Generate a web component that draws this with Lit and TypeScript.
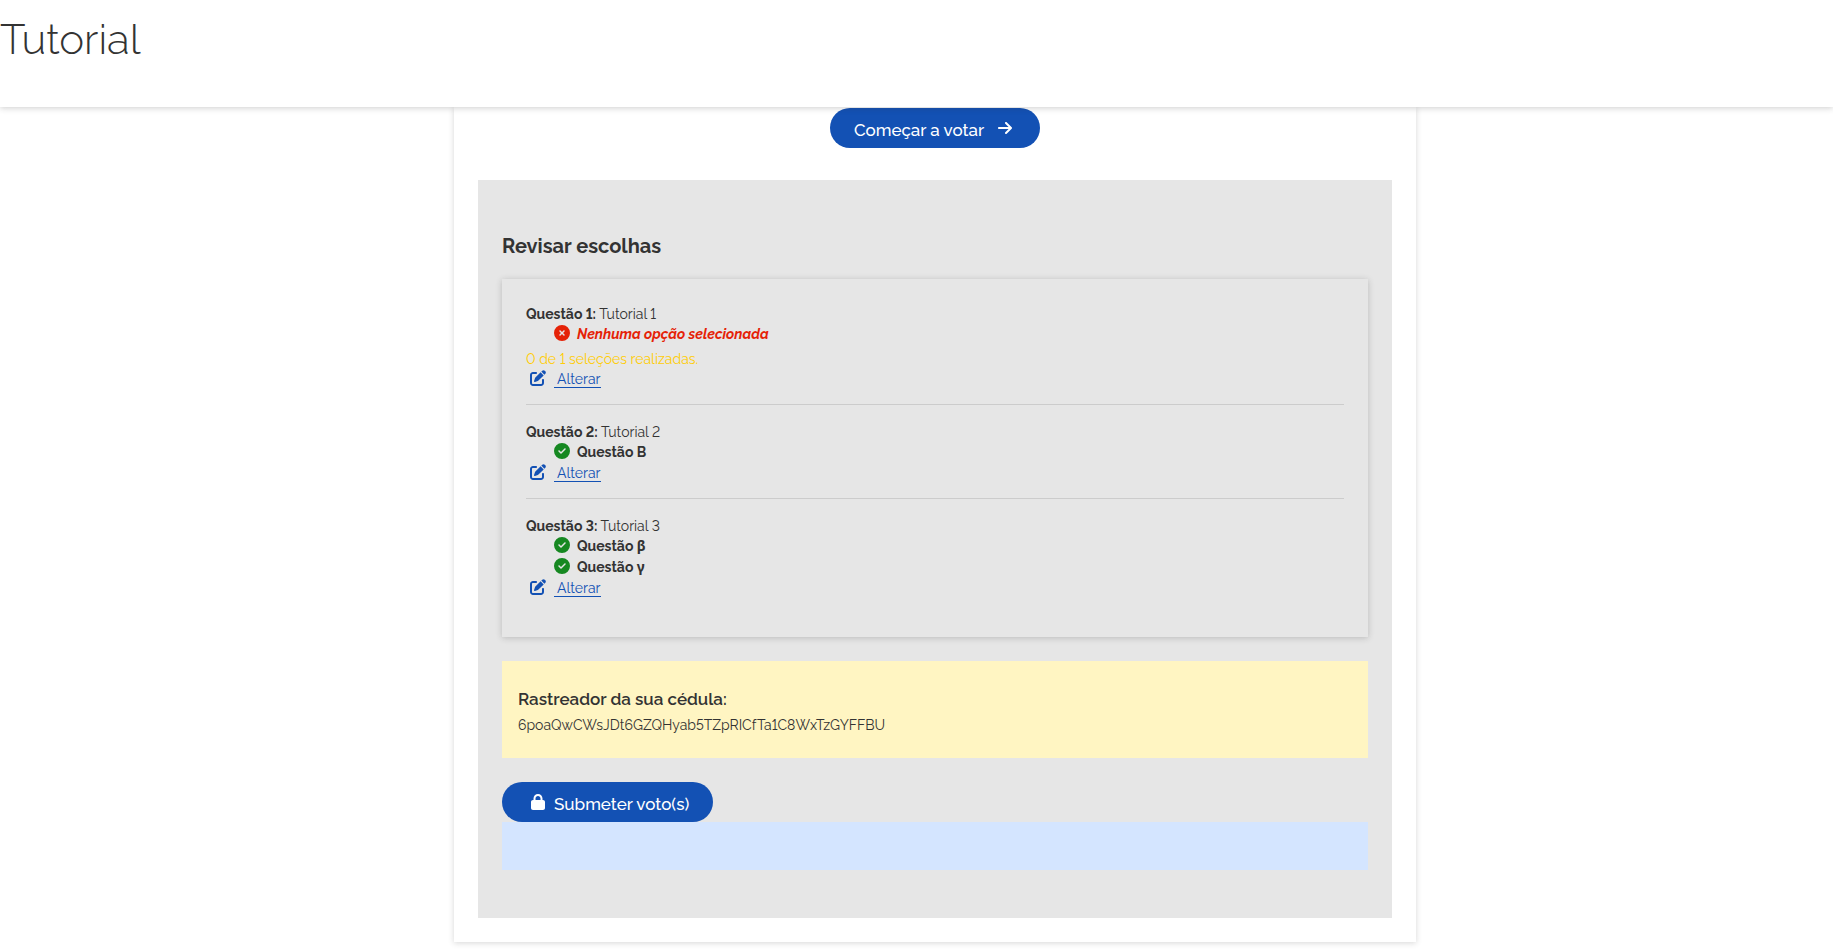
import { LitElement, html, css, svg, nothing } from "lit";
import { customElement, property } from "lit/decorators.js";

const ICONS: Record<string, { box: string; path: string }> = {
  arrow: {
    box: "0 0 448 512",
    path: "M438.6 278.6c12.5-12.5 12.5-32.8 0-45.3l-160-160c-12.5-12.5-32.8-12.5-45.3 0s-12.5 32.8 0 45.3L338.8 224 32 224c-17.7 0-32 14.3-32 32s14.3 32 32 32l306.7 0L233.4 393.4c-12.5 12.5-12.5 32.8 0 45.3s32.8 12.5 45.3 0l160-160z",
  },
  check: {
    box: "0 0 512 512",
    path: "M256 512A256 256 0 1 0 256 0a256 256 0 1 0 0 512zM369 209L241 337c-9.4 9.4-24.6 9.4-33.9 0l-64-64c-9.4-9.4-9.4-24.6 0-33.9s24.6-9.4 33.9 0l47 47L335 175c9.4-9.4 24.6-9.4 33.9 0s9.4 24.6 0 33.9z",
  },
  cross: {
    box: "0 0 512 512",
    path: "M256 512A256 256 0 1 0 256 0a256 256 0 1 0 0 512zM175 175c9.4-9.4 24.6-9.4 33.9 0l47 47 47-47c9.4-9.4 24.6-9.4 33.9 0s9.4 24.6 0 33.9l-47 47 47 47c9.4 9.4 9.4 24.6 0 33.9s-24.6 9.4-33.9 0l-47-47-47 47c-9.4 9.4-24.6 9.4-33.9 0s-9.4-24.6 0-33.9l47-47-47-47c-9.4-9.4-9.4-24.6 0-33.9z",
  },
  edit: {
    box: "0 0 512 512",
    path: "M471.6 21.7c-21.9-21.9-57.3-21.9-79.2 0L362.3 51.7l97.9 97.9 30.1-30.1c21.9-21.9 21.9-57.3 0-79.2L471.6 21.7zm-299.2 220c-6.1 6.1-10.8 13.6-13.5 21.9l-29.6 88.8c-2.9 8.6-.6 18.1 5.8 24.6s15.9 8.7 24.6 5.8l88.8-29.6c8.2-2.7 15.7-7.4 21.9-13.5L437.7 172.3 339.7 74.3 172.4 241.7zM96 64C43 64 0 107 0 160V416c0 53 43 96 96 96H352c53 0 96-43 96-96V320c0-17.7-14.3-32-32-32s-32 14.3-32 32v96c0 17.7-14.3 32-32 32H96c-17.7 0-32-14.3-32-32V160c0-17.7 14.3-32 32-32h96c17.7 0 32-14.3 32-32s-14.3-32-32-32H96z",
  },
  lock: {
    box: "0 0 448 512",
    path: "M144 144v48H304V144c0-44.2-35.8-80-80-80s-80 35.8-80 80zM80 192V144C80 64.5 144.5 0 224 0s144 64.5 144 144v48h16c35.3 0 64 28.7 64 64V448c0 35.3-28.7 64-64 64H64c-35.3 0-64-28.7-64-64V256c0-35.3 28.7-64 64-64H80z",
  },
};

const icon = (name: string) => html`<svg class="icon ${name}" viewBox=${ICONS[name].box} aria-hidden="true">
  ${svg`<path fill="currentColor" d=${ICONS[name].path}></path>`}
</svg>`;

interface Question {
  label: string;
  title: string;
  choices: string[];
  warning?: string;
}

const QUESTIONS: Question[] = [
  { label: "Questão 1:", title: "Tutorial 1", choices: [], warning: "0 de 1 seleções realizadas." },
  { label: "Questão 2:", title: "Tutorial 2", choices: ["Questão B"] },
  { label: "Questão 3:", title: "Tutorial 3", choices: ["Questão β", "Questão γ"] },
];

@customElement("question-review")
class QuestionReview extends LitElement {
  @property({ attribute: false }) question!: Question;

  static styles = css`
    :host {
      display: block;
    }
    .line,
    .warning {
      margin: 0;
      line-height: 20px;
    }
    .label {
      font-weight: 700;
    }
    .choices {
      list-style: none;
      margin: 0;
      padding: 0 0 0 28px;
    }
    .choice {
      display: flex;
      align-items: flex-start;
      gap: 7px;
      height: 21px;
      font-weight: 700;
    }
    .none {
      font-style: italic;
      color: #e52207;
    }
    .icon {
      flex: none;
      width: 16px;
      height: 16px;
      margin-top: 1px;
    }
    .check {
      color: #168821;
    }
    .warning {
      margin-top: 4px;
      color: #ffcd07;
    }
    .change {
      display: flex;
      gap: 8px;
      padding-left: 4px;
      height: 20px;
      color: #1351b4;
    }
    .link {
      padding-left: 3px;
      height: 18px;
      line-height: 20px;
      border-bottom: 1px solid #1351b4;
      color: #1351b4;
      text-decoration: none;
    }
  `;

  render() {
    const { label, title, choices, warning } = this.question;
    return html`
      <p class="line"><span class="label">${label}</span> ${title}</p>
      <ul class="choices">
        ${choices.length
          ? choices.map((c) => html`<li class="choice">${icon("check")}<span>${c}</span></li>`)
          : html`<li class="choice none">${icon("cross")}<span>Nenhuma opção selecionada</span></li>`}
      </ul>
      ${warning ? html`<p class="warning">${warning}</p>` : nothing}
      <div class="change">${icon("edit")}<a class="link" href="#">Alterar</a></div>
    `;
  }
}

@customElement("app-root")
class AppRoot extends LitElement {
  static styles = css`
    :host {
      display: block;
      min-height: 100vh;
      box-sizing: border-box;
      background: #fff;
      color: #333;
      font-family: Raleway, "Noto Sans", sans-serif;
      font-variant-numeric: lining-nums;
      font-size: 14px;
      line-height: 20px;
    }
    .header {
      position: relative;
      z-index: 1;
      padding: 16px 0 43px;
      background: #fff;
      box-shadow: 0 1px 6px rgba(51, 51, 51, 0.24);
    }
    .title {
      margin: 0;
      font-size: 42px;
      line-height: 48px;
      font-weight: 300;
    }
    .page {
      display: grid;
      grid-template-columns: 454fr 962fr 417fr;
    }
    .card {
      grid-column: 2;
      padding: 1px 24px 24px;
      box-shadow: 0 1px 6px rgba(51, 51, 51, 0.2);
    }
    .start {
      display: flex;
      justify-content: center;
      margin-bottom: 32px;
    }
    .button {
      display: inline-flex;
      align-items: center;
      height: 40px;
      padding: 0 24px;
      border: 0;
      border-radius: 20px;
      background: #1351b4;
      color: #fff;
      font-family: inherit;
      font-size: 17px;
      line-height: 24px;
      font-weight: 500;
    }
    .button span {
      padding-top: 3px;
    }
    .button .icon {
      width: 14px;
      height: 16px;
    }
    .next {
      gap: 14px;
      padding-right: 28px;
    }
    .send {
      gap: 9px;
      padding-left: 29px;
    }
    .review {
      padding: 48px 24px;
      background: #e6e6e6;
    }
    .heading {
      margin: 0 0 17px;
      padding-top: 2px;
      font-size: 20px;
      line-height: 32px;
      font-weight: 700;
    }
    .summary {
      padding: 25px 24px 24px;
      box-shadow: 0 1px 6px rgba(51, 51, 51, 0.24);
    }
    .item {
      padding-bottom: 15px;
    }
    .item + .item {
      padding-top: 17px;
      border-top: 1px solid #ccc;
    }
    .tracker {
      margin: 24px 0;
      padding: 25px 16px 20px;
      background: #fff5c2;
    }
    .tracker-title {
      margin: 0;
      font-size: 17px;
      line-height: 26px;
      font-weight: 600;
    }
    .tracker-code {
      margin: 0;
      line-height: 26px;
    }
    .info {
      height: 48px;
      background: #d4e5ff;
    }
  `;

  render() {
    return html`
      <header class="header"><h1 class="title">Tutorial</h1></header>
      <main class="page">
        <div class="card">
          <div class="start">
            <button class="button next" type="button"><span>Começar a votar</span>${icon("arrow")}</button>
          </div>
          <section class="review">
            <h2 class="heading">Revisar escolhas</h2>
            <div class="summary">
              ${QUESTIONS.map((q) => html`<div class="item"><question-review .question=${q}></question-review></div>`)}
            </div>
            <div class="tracker">
              <h3 class="tracker-title">Rastreador da sua cédula:</h3>
              <p class="tracker-code">6poaQwCWsJDt6GZQHyab5TZpRICfTa1C8WxTzGYFFBU</p>
            </div>
            <button class="button send" type="button">${icon("lock")}<span>Submeter voto(s)</span></button>
            <div class="info" role="status"></div>
          </section>
        </div>
      </main>
    `;
  }
}
